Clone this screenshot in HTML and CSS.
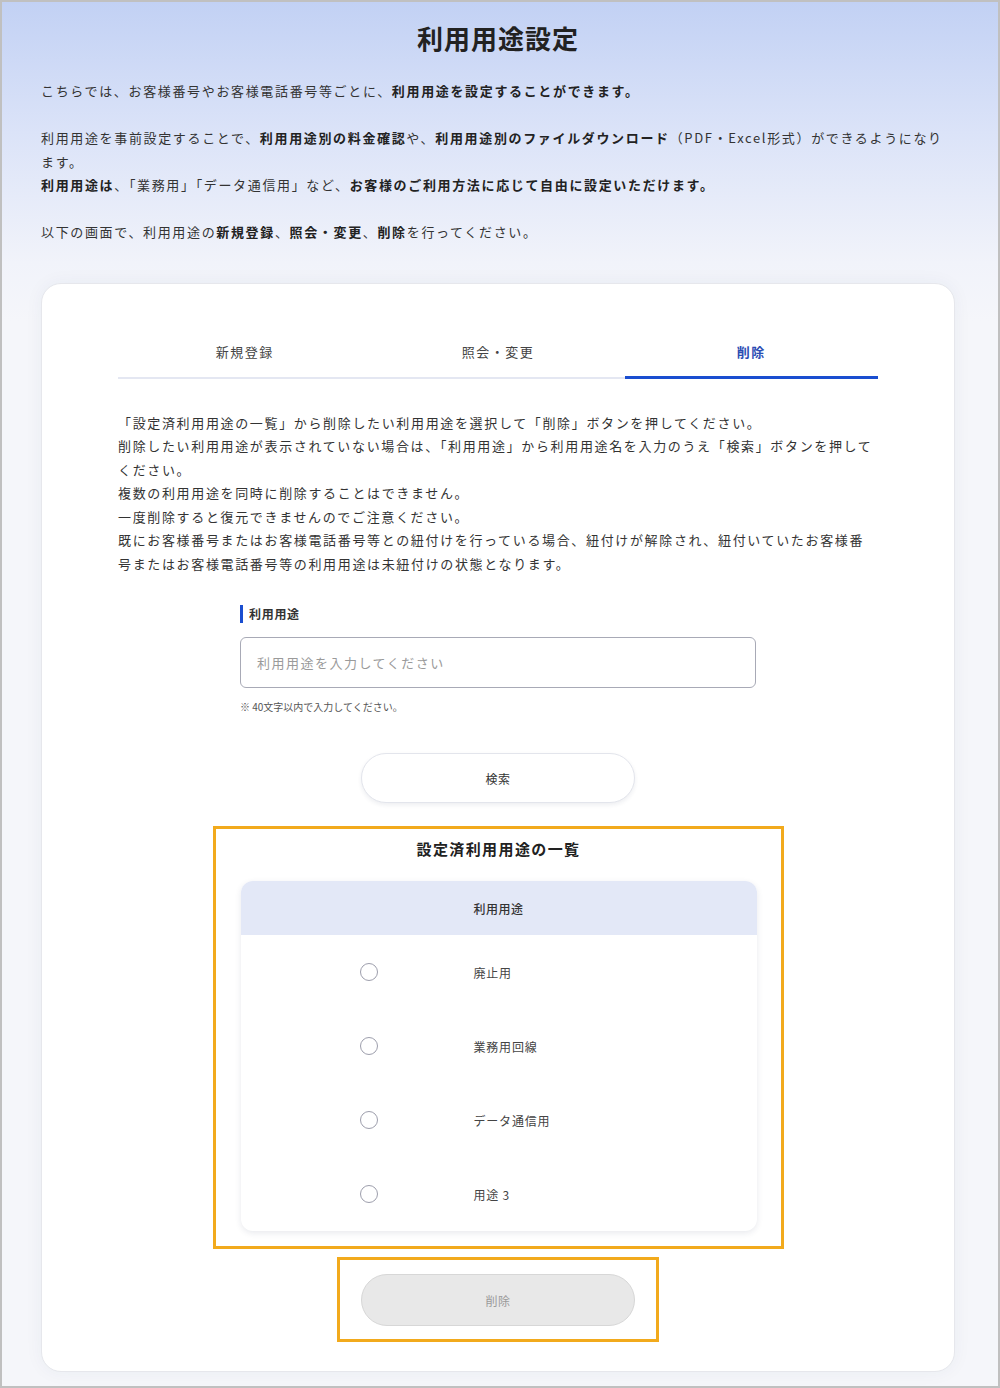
FILE: index.html
```html
<!DOCTYPE html>
<html lang="ja">
<head>
<meta charset="utf-8">
<title>利用用途設定</title>
<link rel="stylesheet" href="styles.css">
</head>
<body>
<div class="frame">
  <div class="page">
    <h1 class="title">利用用途設定</h1>
    <div class="intro">
      <p>こちらでは、お客様番号やお客様電話番号等ごとに、<b>利用用途を設定することができます。</b></p>
      <p>利用用途を事前設定することで、<b>利用用途別の料金確認</b>や、<b>利用用途別のファイルダウンロード</b>（PDF・Excel形式）ができるようになります。<br><b>利用用途は</b>、「業務用」「データ通信用」など、<b>お客様のご利用方法に応じて自由に設定いただけます。</b></p>
      <p>以下の画面で、利用用途の<b>新規登録</b>、<b>照会・変更</b>、<b>削除</b>を行ってください。</p>
    </div>

    <section class="card">
      <nav class="tabs">
        <div class="tab">新規登録</div>
        <div class="tab">照会・変更</div>
        <div class="tab active">削除</div>
      </nav>

      <div class="desc">
        <p>「設定済利用用途の一覧」から削除したい利用用途を選択して「削除」ボタンを押してください。</p>
        <p>削除したい利用用途が表示されていない場合は、「利用用途」から利用用途名を入力のうえ「検索」ボタンを押してください。</p>
        <p>複数の利用用途を同時に削除することはできません。</p>
        <p>一度削除すると復元できませんのでご注意ください。</p>
        <p>既にお客様番号またはお客様電話番号等との紐付けを行っている場合、紐付けが解除され、紐付いていたお客様番号またはお客様電話番号等の利用用途は未紐付けの状態となります。</p>
      </div>

      <div class="field">
        <div class="field-label">利用用途</div>
        <div class="input">利用用途を入力してください</div>
        <div class="note">※ 40文字以内で入力してください。</div>
      </div>

      <div class="btn-row">
        <div class="btn">検索</div>
      </div>

      <div class="highlight list-box">
        <h2 class="list-title">設定済利用用途の一覧</h2>
        <div class="table">
          <div class="thead">利用用途</div>
          <div class="row"><span class="radio"></span><span class="label">廃止用</span></div>
          <div class="row"><span class="radio"></span><span class="label">業務用回線</span></div>
          <div class="row"><span class="radio"></span><span class="label">データ通信用</span></div>
          <div class="row"><span class="radio"></span><span class="label">用途 3</span></div>
        </div>
      </div>

      <div class="highlight del-box">
        <div class="btn disabled">削除</div>
      </div>
    </section>
  </div>
</div>
</body>
</html>
```

FILE: styles.css
```css
* { box-sizing: border-box; }
html, body { margin: 0; padding: 0; }
body {
  font-family: "Noto Sans CJK JP", "Noto Sans", sans-serif;
  color: #333;
}
.frame {
  width: 1000px;
  height: 1388px;
  border: 2px solid #c0c0c0;
  background: linear-gradient(180deg, #c2d1f4 0px, #dbe3f8 130px, #f1f3fa 260px, #f5f6fa 320px, #f5f6fa 100%);
  overflow: hidden;
}
.page {
  padding: 0 43px 0 39px;
}
.title {
  margin: 18px 0 0;
  font-size: 26px;
  line-height: 36px;
  font-weight: 700;
  letter-spacing: 1px;
  text-align: center;
  color: #222;
}
.intro {
  margin-top: 23px;
  font-size: 13px;
  line-height: 23.5px;
  letter-spacing: 1.65px;
}
.intro p { margin: 0 0 23.5px; }
.intro p:last-child { margin-bottom: 0; }
.intro b { color: #222; font-weight: 700; }

.card {
  margin-top: 39px;
  background: #fff;
  border: 1px solid #e6e7ec;
  border-radius: 20px;
  box-shadow: 0 0 18px rgba(40, 50, 90, 0.05);
  padding: 58px 76px 29px 76px;
}
.tabs {
  display: grid;
  grid-template-columns: repeat(3, 1fr);
}
.tab {
  text-align: center;
  font-size: 13px;
  letter-spacing: 1.5px;
  line-height: 20px;
  padding-bottom: 15px;
  border-bottom: 2px solid #e4e7f2;
  color: #444;
}
.tab.active {
  color: #2b4db3;
  font-weight: 700;
  padding-bottom: 14px;
  border-bottom: 3px solid #1a4ed0;
}
.desc {
  margin-top: 32px;
  font-size: 13px;
  line-height: 23.5px;
  letter-spacing: 1.65px;
  color: #333;
}
.desc p { margin: 0; }

.field {
  width: 516px;
  margin: 30px auto 0;
}
.field-label {
  font-size: 12px;
  font-weight: 700;
  letter-spacing: 0.7px;
  line-height: 18px;
  border-left: 3px solid #1a4ed0;
  padding-left: 6px;
  color: #333;
}
.input {
  margin-top: 14px;
  height: 51px;
  border: 1.5px solid #a8aab6;
  border-radius: 6px;
  padding: 0 16px;
  display: flex;
  align-items: center;
  font-size: 13px;
  letter-spacing: 1.5px;
  color: #9a9a9a;
}
.note {
  margin-top: 12px;
  font-size: 10px;
  line-height: 14px;
  color: #555;
}
.btn-row {
  margin-top: 39px;
  display: flex;
  justify-content: center;
}
.btn {
  width: 274px;
  height: 50px;
  border-radius: 25px;
  background: #fff;
  border: 1px solid #e3e5ec;
  box-shadow: 0 2px 4px rgba(30, 40, 80, 0.08);
  display: flex;
  align-items: center;
  justify-content: center;
  font-size: 12px;
  letter-spacing: 0.5px;
  color: #333;
}
.btn.disabled {
  height: 52px;
  border-radius: 26px;
  background: #e8e8e8;
  border: 1px solid #d7d7d7;
  box-shadow: none;
  color: #9a9a9a;
}
.highlight {
  border: 3px solid #f2aa1c;
  margin-left: auto;
  margin-right: auto;
}
.list-box {
  width: 571px;
  margin-top: 23px;
  padding: 9px 24px 15px 25px;
}
.list-title {
  margin: 0;
  font-size: 15px;
  line-height: 22px;
  font-weight: 700;
  letter-spacing: 1.4px;
  text-align: center;
  color: #222;
}
.table {
  margin-top: 21px;
  border-radius: 12px;
  background: #fff;
  box-shadow: 0 2px 6px rgba(30, 40, 80, 0.1);
  overflow: hidden;
}
.thead {
  height: 54px;
  background: #e3e8f7;
  display: flex;
  align-items: center;
  justify-content: center;
  font-size: 12px;
  letter-spacing: 0.5px;
  font-weight: 500;
  color: #333;
}
.row {
  height: 74px;
  display: flex;
  align-items: center;
}
.radio {
  width: 18px;
  height: 18px;
  border: 1.5px solid #9d9eac;
  border-radius: 50%;
  margin-left: 119px;
  flex: none;
}
.label {
  margin-left: 96px;
  font-size: 12px;
  letter-spacing: 0.8px;
  color: #444;
}
.del-box {
  width: 322px;
  margin-top: 8px;
  padding: 14px 21px 13px;
}
```
